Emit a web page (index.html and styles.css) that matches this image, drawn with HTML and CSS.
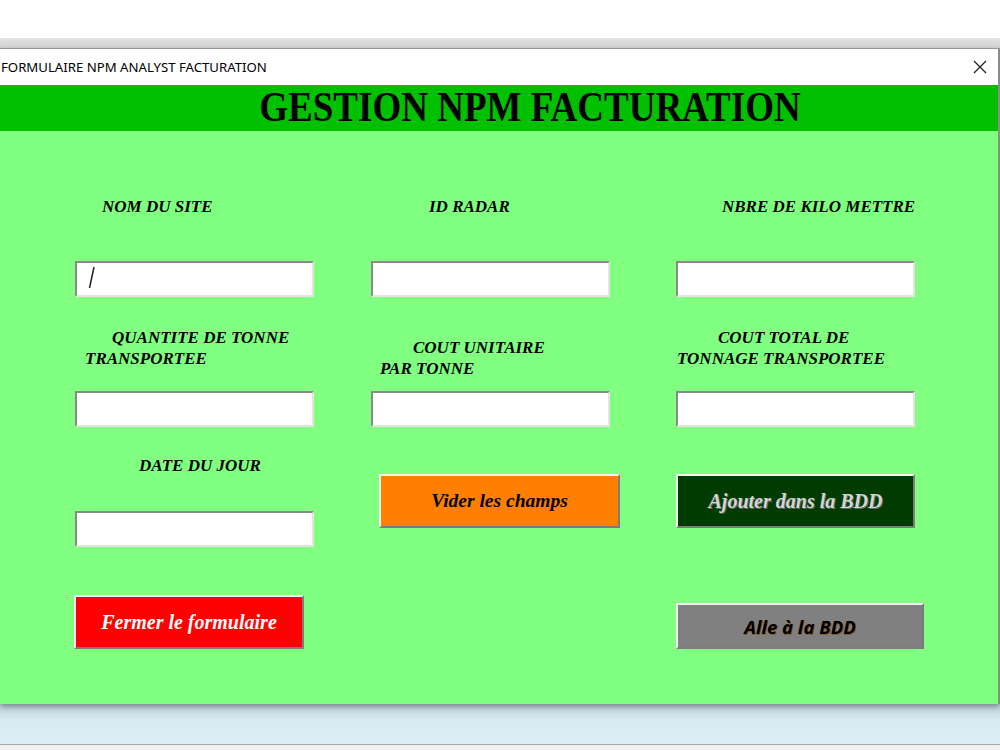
FILE: index.html
```html
<!DOCTYPE html>
<html>
    <head>
        <title>FORMULAIRE NPM ANALYST FACTURATION</title>
        <link rel="stylesheet" href="styles.css">
    </head>
    <body>
        <div class="top-strip"></div>
        <div class="sheet-band"></div>
        <div class="window">
            <div class="titlebar">
                <span class="title">FORMULAIRE NPM ANALYST FACTURATION</span>
                <svg class="close" width="14" height="14" viewBox="0 0 14 14">
                    <path d="M1 1 L13 13 M13 1 L1 13" stroke="#222" stroke-width="1.3" fill="none"/>
                </svg>
            </div>
            <div class="header"><span class="header-text">GESTION NPM FACTURATION</span></div>
            <div class="form">
                <div class="field">
                    <div class="label label-r1"><span class="off-27">NOM DU SITE</span></div>
                    <div class="textbox">
                        <svg class="caret" width="8" height="24" viewBox="0 0 8 24">
                            <path d="M6 1 L1.5 22" stroke="#222" stroke-width="1.5"/>
                        </svg>
                    </div>
                </div>
                <div class="field">
                    <div class="label label-r1"><span class="off-58">ID RADAR</span></div>
                    <div class="textbox"></div>
                </div>
                <div class="field">
                    <div class="label label-r1"><span class="off-46">NBRE DE KILO METTRE</span></div>
                    <div class="textbox"></div>
                </div>

                <div class="field">
                    <div class="label label-r2">
                        <span class="off-37">QUANTITE DE TONNE</span>
                        <span class="off-10">TRANSPORTEE</span>
                    </div>
                    <div class="textbox"></div>
                </div>
                <div class="field">
                    <div class="label label-r2 label-low">
                        <span class="off-42">COUT UNITAIRE</span>
                        <span class="off-9">PAR TONNE</span>
                    </div>
                    <div class="textbox"></div>
                </div>
                <div class="field">
                    <div class="label label-r2">
                        <span class="off-42">COUT TOTAL DE</span>
                        <span class="off-1">TONNAGE TRANSPORTEE</span>
                    </div>
                    <div class="textbox"></div>
                </div>

                <div class="field">
                    <div class="label label-r3"><span class="off-64">DATE DU JOUR</span></div>
                    <div class="textbox"></div>
                </div>
                <button class="btn btn-vider">Vider les champs</button>
                <button class="btn btn-ajouter">Ajouter dans la BDD</button>

                <button class="btn btn-fermer">Fermer le formulaire</button>
                <div></div>
                <button class="btn btn-alle">Alle à la BDD</button>
            </div>
        </div>
        <div class="below"></div>
        <div class="status-line"></div>
    </body>
</html>
```

FILE: styles.css
```css
body {
    margin: 0;
    background-color: #f0f0f0;
    font-family: "Liberation Serif", serif;
}

.top-strip {
    height: 38px;
    background-color: #fff;
}

.sheet-band {
    height: 10px;
    background: linear-gradient(#e4e4e4, #cfcfcf);
    border-bottom: 1px solid #9c9c9c;
}

.window {
    border-right: 2px solid #8c8c8c;
    box-shadow: 0 3px 6px rgba(0, 0, 0, 0.35);
    position: relative;
}

.titlebar {
    height: 36px;
    background-color: #fff;
    display: flex;
    align-items: center;
    justify-content: space-between;
    padding-right: 11px;
}

.title {
    font-family: "Noto Sans", sans-serif;
    font-size: 13.2px;
    color: #000;
    padding-left: 1px;
}

.header {
    height: 46px;
    background-color: #00c000;
    text-align: center;
    font-weight: bold;
    font-size: 37px;
    line-height: 46px;
    padding-left: 62px;
    color: #000;
}

.header-text {
    display: inline-block;
    transform: scaleY(1.15);
    transform-origin: 50% 62%;
}

.form {
    display: grid;
    grid-template-columns: 296px 305px 1fr;
    grid-template-rows: 166px 130px 120px 102px;
    padding: 0 0 55px 75px;
    background-color: #80ff80;
}

.field {
    display: flex;
    flex-direction: column;
    justify-content: flex-end;
}

.label {
    font-weight: bold;
    font-style: italic;
    font-size: 17px;
    color: #000;
}

.label span {
    display: block;
}

.label-r1 {
    line-height: 20px;
    margin-bottom: 44px;
}

.label-r2 {
    line-height: 21px;
    margin-bottom: 22px;
}

.label-low {
    margin-bottom: 12px;
}

.label-r3 {
    line-height: 20px;
    margin-bottom: 35px;
}

.off-1 { padding-left: 1px; }
.off-9 { padding-left: 9px; }
.off-10 { padding-left: 10px; }
.off-27 { padding-left: 27px; }
.off-37 { padding-left: 37px; }
.off-42 { padding-left: 42px; }
.off-46 { padding-left: 46px; }
.off-58 { padding-left: 58px; }
.off-64 { padding-left: 64px; }

.textbox {
    box-sizing: border-box;
    width: 239px;
    height: 36px;
    background-color: #fff;
    border-top: 2px solid #8a8a8a;
    border-left: 2px solid #8a8a8a;
    border-bottom: 2px solid #e4e4e4;
    border-right: 2px solid #e4e4e4;
    padding: 3px 0 0 11px;
}

.caret {
    display: block;
}

.btn {
    box-sizing: border-box;
    border-top: 2px solid #f4f4f4;
    border-left: 2px solid #f4f4f4;
    border-bottom: 2px solid #7c7c7c;
    border-right: 2px solid #7c7c7c;
    font-family: "Liberation Serif", serif;
    font-weight: bold;
    font-style: italic;
    font-size: 20px;
    padding: 0;
    cursor: pointer;
}

.btn-vider {
    align-self: start;
    margin: 47px 0 0 8px;
    width: 241px;
    height: 54px;
    background-color: #ff8000;
    color: #000;
    font-size: 19.5px;
}

.btn-ajouter {
    align-self: start;
    margin-top: 47px;
    width: 239px;
    height: 54px;
    background-color: #003c00;
    color: #d4d4d4;
    text-shadow: 1px 1px 0 #666;
}

.btn-fermer {
    align-self: end;
    margin-left: -1px;
    width: 230px;
    height: 54px;
    background-color: #ff0000;
    color: #fff;
}

.btn-alle {
    align-self: end;
    width: 248px;
    height: 46px;
    background-color: #808080;
    color: #000;
    font-family: "Noto Sans", sans-serif;
    font-size: 18.5px;
    text-shadow: 1px 1px 0 #8a5a20;
}

.below {
    height: 40px;
    background: linear-gradient(#bcd2da, #d8ebf1 40%, #dbeef4);
}

.status-line {
    height: 4px;
    border-top: 1px solid #a8a8a8;
    background-color: #f0f0f0;
}
```
